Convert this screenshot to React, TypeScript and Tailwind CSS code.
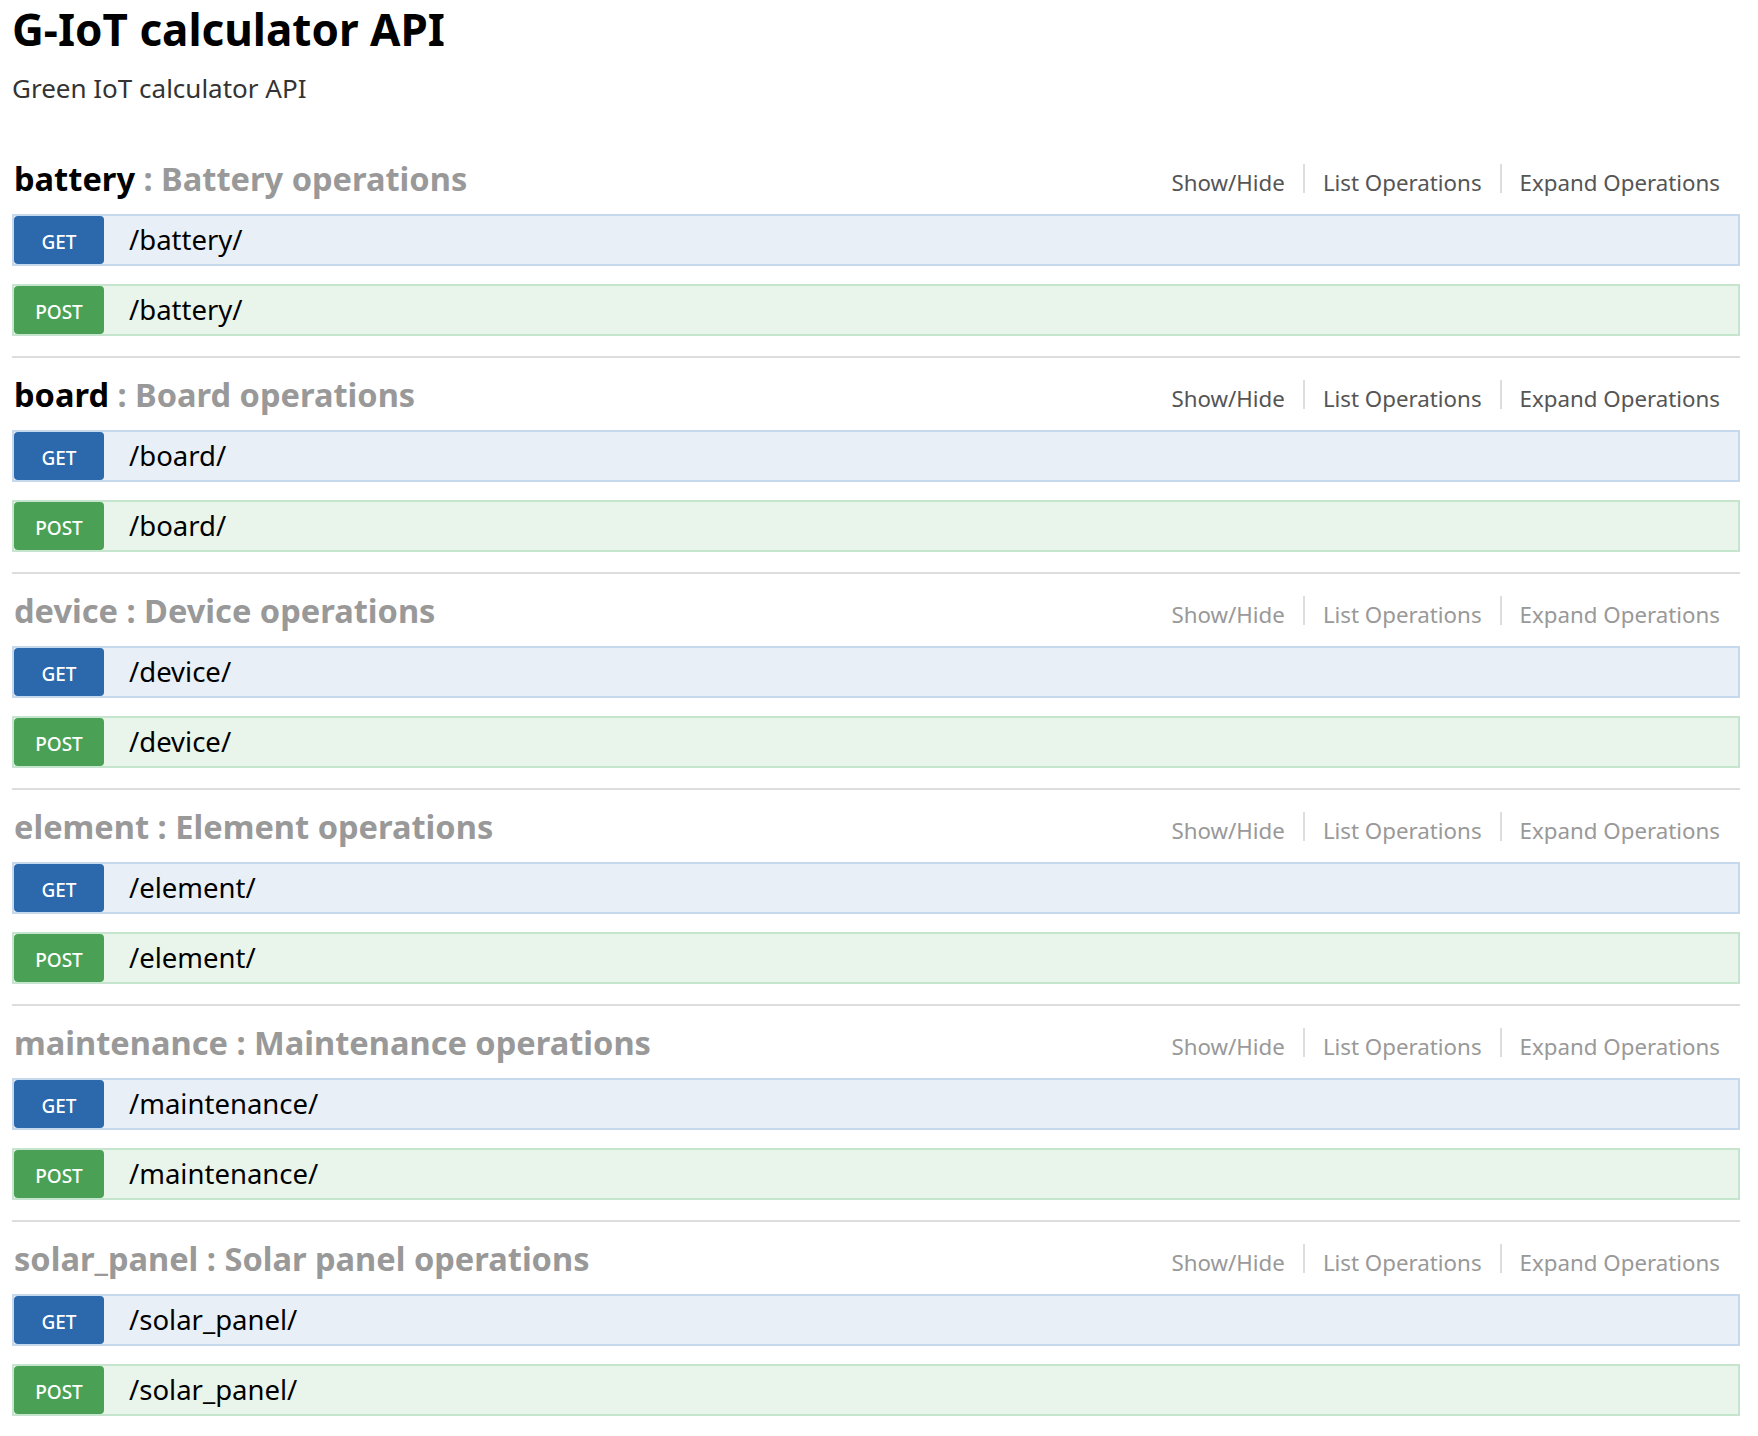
import React from "react"

const sections = [
  { name: "battery", label: "Battery operations", active: true },
  { name: "board", label: "Board operations", active: true },
  { name: "device", label: "Device operations", active: false },
  { name: "element", label: "Element operations", active: false },
  { name: "maintenance", label: "Maintenance operations", active: false },
  { name: "solar_panel", label: "Solar panel operations", active: false }
]

const OpRow = ({ method, path }: { method: "GET" | "POST"; path: string }) => {
  const isGet = method === "GET"
  return (
    <div
      className={
        isGet
          ? "flex h-[52px] items-center border-2 border-[#c5d8ec] bg-[#e8eff7]"
          : "flex h-[52px] items-center border-2 border-[#c6e5cf] bg-[#e9f4eb]"
      }
    >
      <span
        className={
          isGet
            ? "flex h-[48px] w-[90px] items-center justify-center rounded-[4px] bg-[#2b68ac] pt-[4px] text-[19px] font-medium text-white"
            : "flex h-[48px] w-[90px] items-center justify-center rounded-[4px] bg-[#4aa156] pt-[4px] text-[19px] font-medium text-white"
        }
      >
        {method}
      </span>
      <span className="ml-[25px] text-[27.5px] leading-none text-black">{path}</span>
    </div>
  )
}

const Section = ({ name, label, active, last }: { name: string; label: string; active: boolean; last: boolean }) => {
  const linkColor = active ? "text-[#555]" : "text-[#999]"
  return (
    <section className={last ? "" : "border-b-2 border-[#ddd] pb-[20px]"}>
      <div className="flex h-[72px] items-baseline justify-between pl-[2px] pr-[20px] pt-[17px]">
        <h2 className="text-[32.6px] font-bold leading-[40px]">
          <span className={active ? "text-black" : "text-[#999]"}>{name}</span>
          <span className="text-[#999]"> : {label}</span>
        </h2>
        <ul className={`flex items-baseline text-[22.3px] ${linkColor}`}>
          <li>Show/Hide</li>
          <li className="mx-[18px] h-[29px] w-[2px] translate-y-[2px] bg-[#ddd]" />
          <li>List Operations</li>
          <li className="mx-[18px] h-[29px] w-[2px] translate-y-[2px] bg-[#ddd]" />
          <li>Expand Operations</li>
        </ul>
      </div>
      <div className="flex flex-col gap-[18px]">
        <OpRow method="GET" path={`/${name}/`} />
        <OpRow method="POST" path={`/${name}/`} />
      </div>
    </section>
  )
}

export default function App() {
  return (
    <div className="min-h-screen bg-white pl-[12px] pr-[18px] font-['Noto_Sans',sans-serif]">
      <header>
        <h1 className="pt-[5px] text-[44px] font-bold leading-[48px] text-black">G-IoT calculator API</h1>
        <p className="mt-[19px] text-[26px] leading-[32px] text-[#333]">Green IoT calculator API</p>
      </header>
      <div className="mt-[38px]">
        {sections.map((s, i) => (
          <Section key={s.name} {...s} last={i === sections.length - 1} />
        ))}
      </div>
    </div>
  )
}
